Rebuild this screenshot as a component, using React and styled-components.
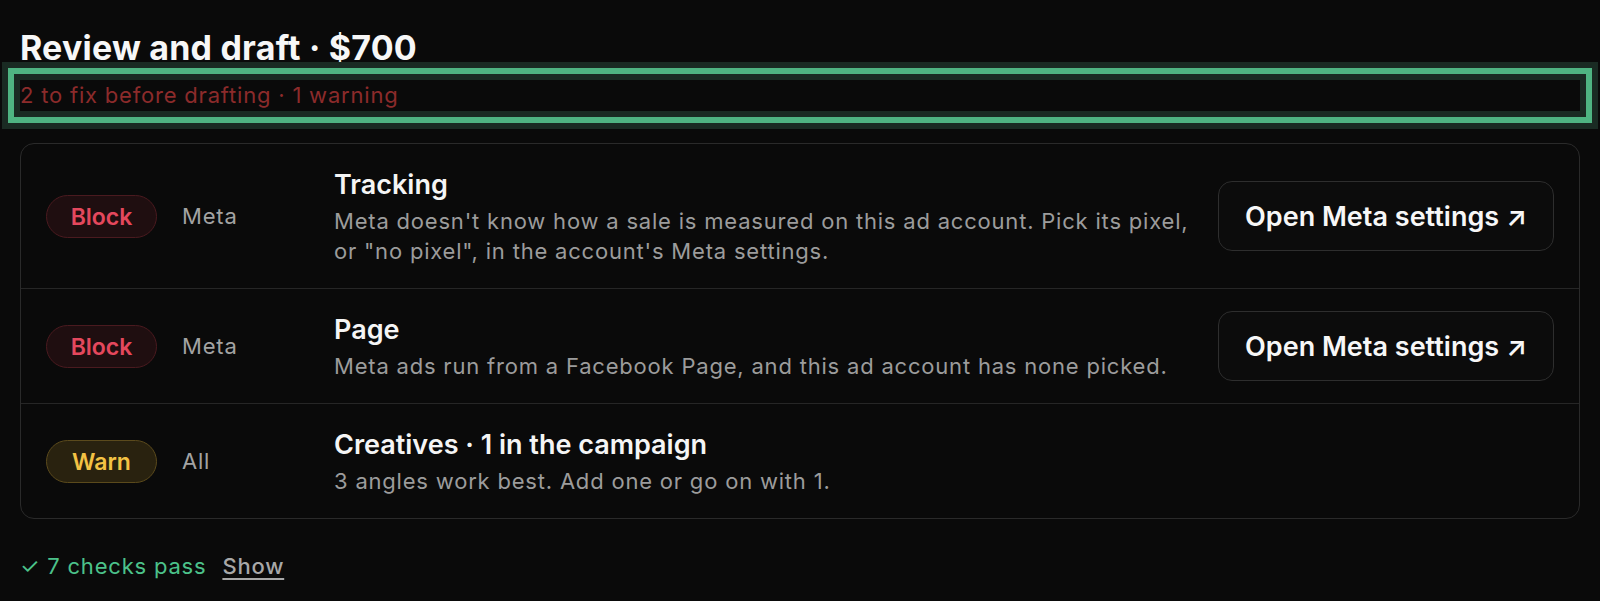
import React from "react";
import styled, { createGlobalStyle } from "styled-components";

const Global = createGlobalStyle`
  html, body { margin: 0; padding: 0; background: #0a0a0a; }
  body { font-family: Inter, "Noto Sans", "DejaVu Sans", sans-serif; color: #f2f2f2; -webkit-font-smoothing: antialiased; }
  * { box-sizing: border-box; }
`;

const Page = styled.main`
  padding: 28px 20px 24px;
  display: flex;
  flex-direction: column;
`;

const Title = styled.h1`
  margin: 0;
  font-size: 34px;
  letter-spacing: 0.2px;
  line-height: 40px;
  font-weight: 700;
  color: #f7f7f7;
`;

const Summary = styled.p`
  margin: 12px 0 0;
  height: 31px;
  font-size: 22px;
  letter-spacing: 0.8px;
  line-height: 31px;
  color: #8c2b2b;
  box-shadow: 0 0 0 6px #1a2b23, 0 0 0 12px #4fb482, 0 0 0 18px #1a2b23;
`;

const Card = styled.section`
  margin-top: 32px;
  border: 1px solid #2a2a2a;
  border-radius: 14px;
  overflow: hidden;
`;

const Row = styled.div`
  display: grid;
  grid-template-columns: 111px 127px 1fr auto;
  column-gap: 25px;
  align-items: center;
  padding: 22px 25px;
  border-bottom: 1px solid #262626;
  &:last-child { border-bottom: none; }
`;

const tones = {
  block: { fg: "#e4485d", bg: "#1f0e10", bd: "#4a1a1f" },
  warn: { fg: "#f3c244", bg: "#29220f", bd: "#5b4a1c" },
};

const Badge = styled.span`
  display: inline-flex;
  align-items: center;
  justify-content: center;
  height: 43px;
  width: 111px;
  border-radius: 999px;
  font-size: 23px;
  font-weight: 600;
  padding-top: 2px;
  color: ${(p) => tones[p.$tone].fg};
  background: ${(p) => tones[p.$tone].bg};
  border: 1px solid ${(p) => tones[p.$tone].bd};
`;

const Source = styled.span`
  font-size: 22px;
  letter-spacing: 0.8px;
  color: #a3a3a3;
`;

const Body = styled.div`
  display: flex;
  flex-direction: column;
  min-width: 0;
`;

const RowTitle = styled.div`
  font-size: 27px;
  line-height: 38px;
  font-weight: 600;
  color: #f5f5f5;
`;

const Desc = styled.div`
  margin-top: 2px;
  font-size: 22px;
  letter-spacing: 0.8px;
  line-height: 30px;
  color: #9c9c9c;
`;

const ActionButton = styled.button`
  height: 70px;
  padding: 0 26px;
  border-radius: 14px;
  border: 1px solid #2e2e2e;
  background: #0c0c0c;
  color: #f7f7f7;
  font-family: inherit;
  font-size: 27px;
  font-weight: 600;
  white-space: nowrap;
  cursor: pointer;
`;

const Footer = styled.div`
  margin-top: 32px;
  display: flex;
  align-items: center;
  gap: 16px;
  font-size: 22px;
  letter-spacing: 0.8px;
  line-height: 30px;
`;

const Pass = styled.span`
  color: #4cc28a;
`;

const ShowLink = styled.a`
  color: #a8a8a8;
  font-weight: 500;
  text-decoration: underline;
  text-underline-offset: 4px;
  text-decoration-thickness: 2px;
  cursor: pointer;
`;

const checks = [
  {
    tone: "block",
    label: "Block",
    source: "Meta",
    title: "Tracking",
    desc: "Meta doesn't know how a sale is measured on this ad account. Pick its pixel, or \"no pixel\", in the account's Meta settings.",
    action: "Open Meta settings ↗",
  },
  {
    tone: "block",
    label: "Block",
    source: "Meta",
    title: "Page",
    desc: "Meta ads run from a Facebook Page, and this ad account has none picked.",
    action: "Open Meta settings ↗",
  },
  {
    tone: "warn",
    label: "Warn",
    source: "All",
    title: "Creatives · 1 in the campaign",
    desc: "3 angles work best. Add one or go on with 1.",
  },
];

export default function App() {
  return (
    <>
      <Global />
      <Page>
        <Title>Review and draft · $700</Title>
        <Summary>2 to fix before drafting · 1 warning</Summary>
        <Card>
          {checks.map((c, i) => (
            <Row key={i}>
              <Badge $tone={c.tone}>{c.label}</Badge>
              <Source>{c.source}</Source>
              <Body>
                <RowTitle>{c.title}</RowTitle>
                <Desc>{c.desc}</Desc>
              </Body>
              {c.action ? <ActionButton>{c.action}</ActionButton> : <span />}
            </Row>
          ))}
        </Card>
        <Footer>
          <Pass>✓ 7 checks pass</Pass>
          <ShowLink>Show</ShowLink>
        </Footer>
      </Page>
    </>
  );
}
